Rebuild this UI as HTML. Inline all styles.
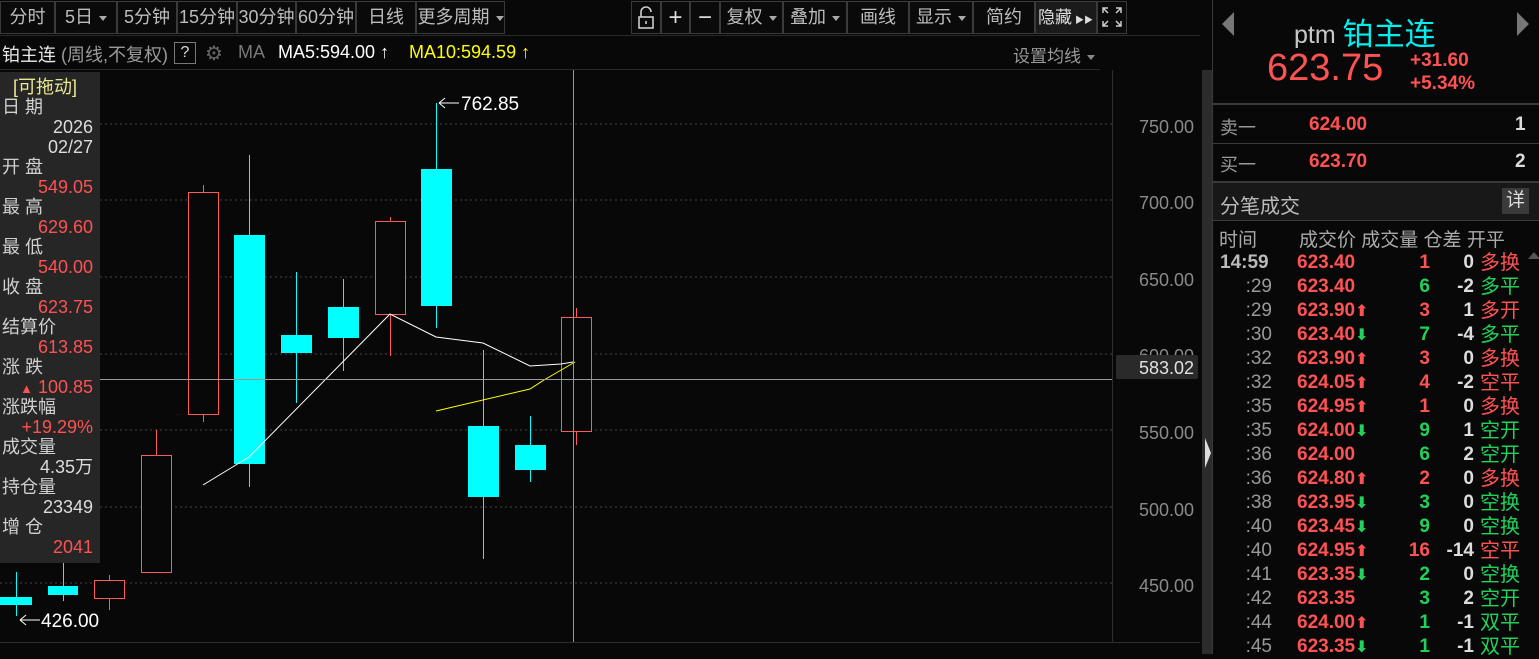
<!DOCTYPE html>
<html><head><meta charset="utf-8"><style>
*{margin:0;padding:0;box-sizing:border-box}
body{width:1539px;height:654px;background:#080808;overflow:hidden;position:relative;font-family:"Liberation Sans","Noto Sans CJK SC",sans-serif;color:#c8c8c8}
.a{position:absolute;white-space:nowrap}
.tb{position:absolute;top:1px;height:33px;border:1px solid #3a3a3a;color:#bdbdbd;font-size:18px;line-height:31px;text-align:center;background:#0a0a0a;white-space:nowrap;overflow:hidden}
.tri{display:inline-block;width:0;height:0;border-left:4px solid transparent;border-right:4px solid transparent;border-top:5px solid #aaa;vertical-align:middle;margin-left:6px}
.r{color:#ff5252}.g{color:#21d25a}.w{color:#dcdcdc}
.lab{position:absolute;left:2px;font-size:18px;line-height:20px;color:#d0d0d0}
.val{position:absolute;right:7px;font-size:18px;line-height:20px;text-align:right}
.row{position:absolute;left:1212px;width:327px;height:24px;font-size:19px;font-weight:bold;line-height:24px}
.row span{position:absolute}
.row b{font-family:"DejaVu Sans",sans-serif;font-size:16px}
</style></head><body>
<div class="tb" style="left:0;width:55px">分时</div>
<div class="tb" style="left:55px;width:62px">5日<span class="tri"></span></div>
<div class="tb" style="left:117px;width:60px">5分钟</div>
<div class="tb" style="left:177px;width:60px">15分钟</div>
<div class="tb" style="left:237px;width:59px">30分钟</div>
<div class="tb" style="left:296px;width:60px">60分钟</div>
<div class="tb" style="left:356px;width:60px">日线</div>
<div class="tb" style="left:416px;width:89px">更多周期<span class="tri"></span></div>
<div class="tb" style="left:631px;width:30px;font-size:20px"><svg width="20" height="24" viewBox="0 0 20 24" style="margin-top:4px"><path d="M5 11V6a5 5 0 0 1 10 0" fill="none" stroke="#ccc" stroke-width="1.6"/><rect x="3" y="11" width="14" height="11" fill="none" stroke="#ccc" stroke-width="1.6"/><line x1="10" y1="15" x2="10" y2="18" stroke="#ccc" stroke-width="1.6"/></svg></div>
<div class="tb" style="left:661px;width:29px;font-size:24px;color:#ddd">+</div>
<div class="tb" style="left:690px;width:30px;font-size:24px;color:#ddd">−</div>
<div class="tb" style="left:720px;width:63px">复权<span class="tri"></span></div>
<div class="tb" style="left:783px;width:64px">叠加<span class="tri"></span></div>
<div class="tb" style="left:847px;width:62px">画线</div>
<div class="tb" style="left:909px;width:64px">显示<span class="tri"></span></div>
<div class="tb" style="left:973px;width:62px">简约</div>
<div class="tb" style="left:1035px;width:62px;background:#1a1a1a;color:#ddd;font-size:17px;text-align:left;padding-left:2px">隐藏<span style="font-size:9px;margin-left:3px">▶▶</span></div>
<div class="tb" style="left:1097px;width:30px"><svg width="20" height="20" viewBox="0 0 20 20" style="margin-top:5px" fill="none" stroke="#ccc" stroke-width="1.5"><path d="M1 6V1h5M1 1l5 5M14 1h5v5M19 1l-5 5M1 14v5h5M1 19l5-5M14 19h5v-5M19 19l-5-5"/></svg></div>
<div class="a" style="left:0;top:35px;width:1200px;height:1px;background:#2a2a2a"></div>
<div class="a" style="left:2px;top:41px;font-size:18px;color:#e8e8e8">铂主连 <span style="color:#9a9a9a">(周线,不复权)</span></div>
<div class="a" style="left:174px;top:42px;width:22px;height:22px;border:1px solid #777;font-size:16px;text-align:center;line-height:20px;color:#ddd">?</div>
<div class="a" style="left:205px;top:41px;font-size:20px;color:#666">⚙</div>
<div class="a" style="left:238px;top:42px;font-size:18px;color:#777">MA</div>
<div class="a" style="left:278px;top:42px;font-size:18px;color:#fff">MA5:594.00 ↑</div>
<div class="a" style="left:409px;top:42px;font-size:18px;color:#ffff00">MA10:594.59 ↑</div>
<div class="a" style="left:1013px;top:42px;font-size:17px;color:#999">设置均线<span class="tri" style="border-top-color:#888"></span></div>
<div class="a" style="left:0;top:69px;width:1100px;height:1px;background:#2a2a2a"></div>
<svg class="a" style="left:0;top:0" width="1212" height="654">
<g stroke="#444" stroke-dasharray="2,3" stroke-width="1">
<line x1="100" y1="124" x2="1112" y2="124"/><line x1="100" y1="200" x2="1112" y2="200"/><line x1="100" y1="277" x2="1112" y2="277"/><line x1="100" y1="354" x2="1112" y2="354"/><line x1="100" y1="430" x2="1112" y2="430"/><line x1="0" y1="507" x2="1112" y2="507"/><line x1="0" y1="583" x2="1112" y2="583"/>
</g>
<line x1="1112.5" y1="70" x2="1112.5" y2="642" stroke="#2e2e2e"/>
<line x1="0" y1="642.5" x2="1200" y2="642.5" stroke="#2e2e2e"/>
<g stroke="#00ffff" stroke-width="1">
<line x1="16.5" y1="572" x2="16.5" y2="616"/><line x1="63.5" y1="558" x2="63.5" y2="601"/>
<line x1="249.5" y1="155" x2="249.5" y2="487"/><line x1="296.5" y1="272" x2="296.5" y2="403"/>
<line x1="343.5" y1="279" x2="343.5" y2="371"/><line x1="436.5" y1="103" x2="436.5" y2="328"/>
<line x1="483.5" y1="350" x2="483.5" y2="559"/><line x1="530.5" y1="416" x2="530.5" y2="482"/>
</g>
<g fill="#00ffff">
<rect x="0" y="597" width="32" height="8"/><rect x="48" y="586" width="30" height="9"/>
<rect x="234" y="235" width="31" height="229"/><rect x="281" y="335" width="31" height="18"/>
<rect x="328" y="307" width="31" height="31"/><rect x="421" y="169" width="31" height="137"/>
<rect x="468" y="426" width="31" height="71"/><rect x="515" y="445" width="31" height="25"/>
</g>
<g stroke="#ff5a5a" stroke-width="1" fill="none">
<line x1="109.5" y1="575" x2="109.5" y2="610"/><rect x="94.5" y="580.5" width="30" height="18" fill="#080808"/>
<line x1="156.5" y1="430" x2="156.5" y2="455"/><rect x="141.5" y="455.5" width="30" height="117" fill="#080808"/>
<line x1="203.5" y1="185" x2="203.5" y2="422"/><rect x="188.5" y="192.5" width="30" height="222" fill="#080808"/>
<line x1="390.5" y1="217" x2="390.5" y2="356"/><rect x="375.5" y="221.5" width="30" height="93" fill="#080808"/>
<line x1="576.5" y1="308" x2="576.5" y2="445"/><rect x="561.5" y="317.5" width="30" height="114" fill="#080808"/>
</g>
<polyline points="203,485 249,457 390,314 436,337 483,343 530,366 561,364 573,362" fill="none" stroke="#fff" stroke-width="1"/>
<polyline points="436,411 530,389 544,380 575,362" fill="none" stroke="#ffff00" stroke-width="1"/>
<line x1="573.5" y1="70" x2="573.5" y2="642" stroke="#999" stroke-width="1"/>
<line x1="100" y1="379.5" x2="1112" y2="379.5" stroke="#999" stroke-width="1"/>
<line x1="0" y1="379.5" x2="100" y2="379.5" stroke="#999" stroke-width="1"/>
<g font-family="Liberation Sans,sans-serif" font-size="18" fill="#8a8a8a" text-anchor="end">
<text x="1194" y="133">750.00</text><text x="1194" y="209">700.00</text><text x="1194" y="286">650.00</text><text x="1194" y="362">600.00</text><text x="1194" y="439">550.00</text><text x="1194" y="516">500.00</text><text x="1194" y="592">450.00</text>
</g>
<rect x="1116" y="355" width="82" height="24" rx="2" fill="#2a2a2a"/>
<text x="1194" y="374" font-family="Liberation Sans,sans-serif" font-size="18" fill="#e0e0e0" text-anchor="end">583.02</text>
<g font-family="Liberation Sans,sans-serif" font-size="19" fill="#fff">
<path d="M439 103h20M439 103l6-5M439 103l6 5" stroke="#fff" fill="none"/><text x="461" y="110">762.85</text>
<path d="M20 620h20M20 620l6-5M20 620l6 5" stroke="#fff" fill="none"/><text x="41" y="627">426.00</text>
</g>
<rect x="1202" y="70" width="10" height="584" fill="#2c2c2c"/>
<path d="M1205 438l6 15-6 15z" fill="#ddd"/>
</svg>
<div class="a" style="left:0;top:72px;width:100px;height:491px;background:#262626"></div>
<div class="a" style="left:13px;top:77px;font-size:18px;line-height:20px;color:#e8e890">[可拖动]</div>
<div class="lab" style="top:97px">日 期</div><div class="val w" style="top:117px;left:0;width:93px">2026</div>
<div class="val w" style="top:137px;left:0;width:93px">02/27</div>
<div class="lab" style="top:157px">开 盘</div><div class="val r" style="top:177px;left:0;width:93px">549.05</div>
<div class="lab" style="top:197px">最 高</div><div class="val r" style="top:217px;left:0;width:93px">629.60</div>
<div class="lab" style="top:237px">最 低</div><div class="val r" style="top:257px;left:0;width:93px">540.00</div>
<div class="lab" style="top:277px">收 盘</div><div class="val r" style="top:297px;left:0;width:93px">623.75</div>
<div class="lab" style="top:317px">结算价</div><div class="val r" style="top:337px;left:0;width:93px">613.85</div>
<div class="lab" style="top:357px">涨 跌</div><div class="val r" style="top:377px;left:0;width:93px"><span style="font-size:13px">▲</span> 100.85</div>
<div class="lab" style="top:397px">涨跌幅</div><div class="val r" style="top:417px;left:0;width:93px">+19.29%</div>
<div class="lab" style="top:437px">成交量</div><div class="val w" style="top:457px;left:0;width:93px">4.35万</div>
<div class="lab" style="top:477px">持仓量</div><div class="val w" style="top:497px;left:0;width:93px">23349</div>
<div class="lab" style="top:517px">增 仓</div><div class="val r" style="top:537px;left:0;width:93px">2041</div>
<div class="a" style="left:1212px;top:0;width:327px;height:654px;border-left:1px solid #3a3a3a"></div>
<div class="a" style="left:1222px;top:12px;width:0;height:0;border-top:12px solid transparent;border-bottom:12px solid transparent;border-right:12px solid #777"></div>
<div class="a" style="left:1517px;top:12px;width:0;height:0;border-top:12px solid transparent;border-bottom:12px solid transparent;border-left:12px solid #777"></div>
<div class="a" style="left:1294px;top:7px;font-size:25px;color:#c8c8c8">ptm <span style="color:#00f0f0;font-size:31px;position:relative;top:2px">铂主连</span></div>
<div class="a r" style="left:1267px;top:47px;font-size:38px">623.75</div>
<div class="a r" style="left:1410px;top:50px;font-size:19px;font-weight:bold">+31.60</div>
<div class="a r" style="left:1410px;top:73px;font-size:19px;font-weight:bold">+5.34%</div>
<div class="a" style="left:1213px;top:103px;width:326px;height:2px;background:#3a3a3a"></div>
<div class="a" style="left:1220px;top:114px;font-size:18px;color:#999">卖一</div>
<div class="a r" style="left:1309px;top:114px;font-size:19px;font-weight:bold">624.00</div>
<div class="a w" style="left:1515px;top:114px;font-size:19px;font-weight:bold">1</div>
<div class="a" style="left:1213px;top:143px;width:326px;height:1px;background:#3a3a3a"></div>
<div class="a" style="left:1220px;top:151px;font-size:18px;color:#999">买一</div>
<div class="a r" style="left:1309px;top:151px;font-size:19px;font-weight:bold">623.70</div>
<div class="a w" style="left:1515px;top:151px;font-size:19px;font-weight:bold">2</div>
<div class="a" style="left:1213px;top:181px;width:326px;height:40px;background:#181818;border-top:2px solid #3a3a3a;border-bottom:1px solid #3a3a3a"></div>
<div class="a" style="left:1220px;top:190px;font-size:20px;color:#bbb">分笔成交</div>
<div class="a" style="left:1502px;top:188px;width:27px;height:26px;background:#3a3a3a;color:#ddd;font-size:19px;text-align:center;line-height:26px">详</div>
<div class="a" style="left:1219px;top:225px;font-size:19px;color:#aaa">时间</div>
<div class="a" style="left:1299px;top:225px;font-size:19px;color:#aaa">成交价 成交量 仓差 开平</div>
<div class="row" style="top:251px"><span style="left:8px;color:#bbb">14:59</span><span class="r" style="left:85px">623.40</span><span class="r" style="right:109px">1</span><span class="w" style="right:65px">0</span><span class="r" style="left:268px;font-weight:normal;font-size:20px">多换</span></div>
<div class="row" style="top:275px"><span style="right:267px;color:#999;font-weight:normal">:29</span><span class="r" style="left:85px">623.40</span><span class="g" style="right:109px">6</span><span class="w" style="right:65px">-2</span><span class="g" style="left:268px;font-weight:normal;font-size:20px">多平</span></div>
<div class="row" style="top:299px"><span style="right:267px;color:#999;font-weight:normal">:29</span><span class="r" style="left:85px">623.90<b>⬆</b></span><span class="r" style="right:109px">3</span><span class="w" style="right:65px">1</span><span class="r" style="left:268px;font-weight:normal;font-size:20px">多开</span></div>
<div class="row" style="top:323px"><span style="right:267px;color:#999;font-weight:normal">:30</span><span class="r" style="left:85px">623.40<b class="g">⬇</b></span><span class="g" style="right:109px">7</span><span class="w" style="right:65px">-4</span><span class="g" style="left:268px;font-weight:normal;font-size:20px">多平</span></div>
<div class="row" style="top:347px"><span style="right:267px;color:#999;font-weight:normal">:32</span><span class="r" style="left:85px">623.90<b>⬆</b></span><span class="r" style="right:109px">3</span><span class="w" style="right:65px">0</span><span class="r" style="left:268px;font-weight:normal;font-size:20px">多换</span></div>
<div class="row" style="top:371px"><span style="right:267px;color:#999;font-weight:normal">:32</span><span class="r" style="left:85px">624.05<b>⬆</b></span><span class="r" style="right:109px">4</span><span class="w" style="right:65px">-2</span><span class="r" style="left:268px;font-weight:normal;font-size:20px">空平</span></div>
<div class="row" style="top:395px"><span style="right:267px;color:#999;font-weight:normal">:35</span><span class="r" style="left:85px">624.95<b>⬆</b></span><span class="r" style="right:109px">1</span><span class="w" style="right:65px">0</span><span class="r" style="left:268px;font-weight:normal;font-size:20px">多换</span></div>
<div class="row" style="top:419px"><span style="right:267px;color:#999;font-weight:normal">:35</span><span class="r" style="left:85px">624.00<b class="g">⬇</b></span><span class="g" style="right:109px">9</span><span class="w" style="right:65px">1</span><span class="g" style="left:268px;font-weight:normal;font-size:20px">空开</span></div>
<div class="row" style="top:443px"><span style="right:267px;color:#999;font-weight:normal">:36</span><span class="r" style="left:85px">624.00</span><span class="g" style="right:109px">6</span><span class="w" style="right:65px">2</span><span class="g" style="left:268px;font-weight:normal;font-size:20px">空开</span></div>
<div class="row" style="top:467px"><span style="right:267px;color:#999;font-weight:normal">:36</span><span class="r" style="left:85px">624.80<b>⬆</b></span><span class="r" style="right:109px">2</span><span class="w" style="right:65px">0</span><span class="r" style="left:268px;font-weight:normal;font-size:20px">多换</span></div>
<div class="row" style="top:491px"><span style="right:267px;color:#999;font-weight:normal">:38</span><span class="r" style="left:85px">623.95<b class="g">⬇</b></span><span class="g" style="right:109px">3</span><span class="w" style="right:65px">0</span><span class="g" style="left:268px;font-weight:normal;font-size:20px">空换</span></div>
<div class="row" style="top:515px"><span style="right:267px;color:#999;font-weight:normal">:40</span><span class="r" style="left:85px">623.45<b class="g">⬇</b></span><span class="g" style="right:109px">9</span><span class="w" style="right:65px">0</span><span class="g" style="left:268px;font-weight:normal;font-size:20px">空换</span></div>
<div class="row" style="top:539px"><span style="right:267px;color:#999;font-weight:normal">:40</span><span class="r" style="left:85px">624.95<b>⬆</b></span><span class="r" style="right:109px">16</span><span class="w" style="right:65px">-14</span><span class="r" style="left:268px;font-weight:normal;font-size:20px">空平</span></div>
<div class="row" style="top:563px"><span style="right:267px;color:#999;font-weight:normal">:41</span><span class="r" style="left:85px">623.35<b class="g">⬇</b></span><span class="g" style="right:109px">2</span><span class="w" style="right:65px">0</span><span class="g" style="left:268px;font-weight:normal;font-size:20px">空换</span></div>
<div class="row" style="top:587px"><span style="right:267px;color:#999;font-weight:normal">:42</span><span class="r" style="left:85px">623.35</span><span class="g" style="right:109px">3</span><span class="w" style="right:65px">2</span><span class="g" style="left:268px;font-weight:normal;font-size:20px">空开</span></div>
<div class="row" style="top:611px"><span style="right:267px;color:#999;font-weight:normal">:44</span><span class="r" style="left:85px">624.00<b>⬆</b></span><span class="g" style="right:109px">1</span><span class="w" style="right:65px">-1</span><span class="g" style="left:268px;font-weight:normal;font-size:20px">双平</span></div>
<div class="row" style="top:635px"><span style="right:267px;color:#999;font-weight:normal">:45</span><span class="r" style="left:85px">623.35<b class="g">⬇</b></span><span class="g" style="right:109px">1</span><span class="w" style="right:65px">-1</span><span class="g" style="left:268px;font-weight:normal;font-size:20px">双平</span></div>
<div class="a" style="left:1528px;top:252px;width:0;height:0;border-left:6px solid transparent;border-right:6px solid transparent;border-bottom:7px solid #555"></div>
</body></html>
